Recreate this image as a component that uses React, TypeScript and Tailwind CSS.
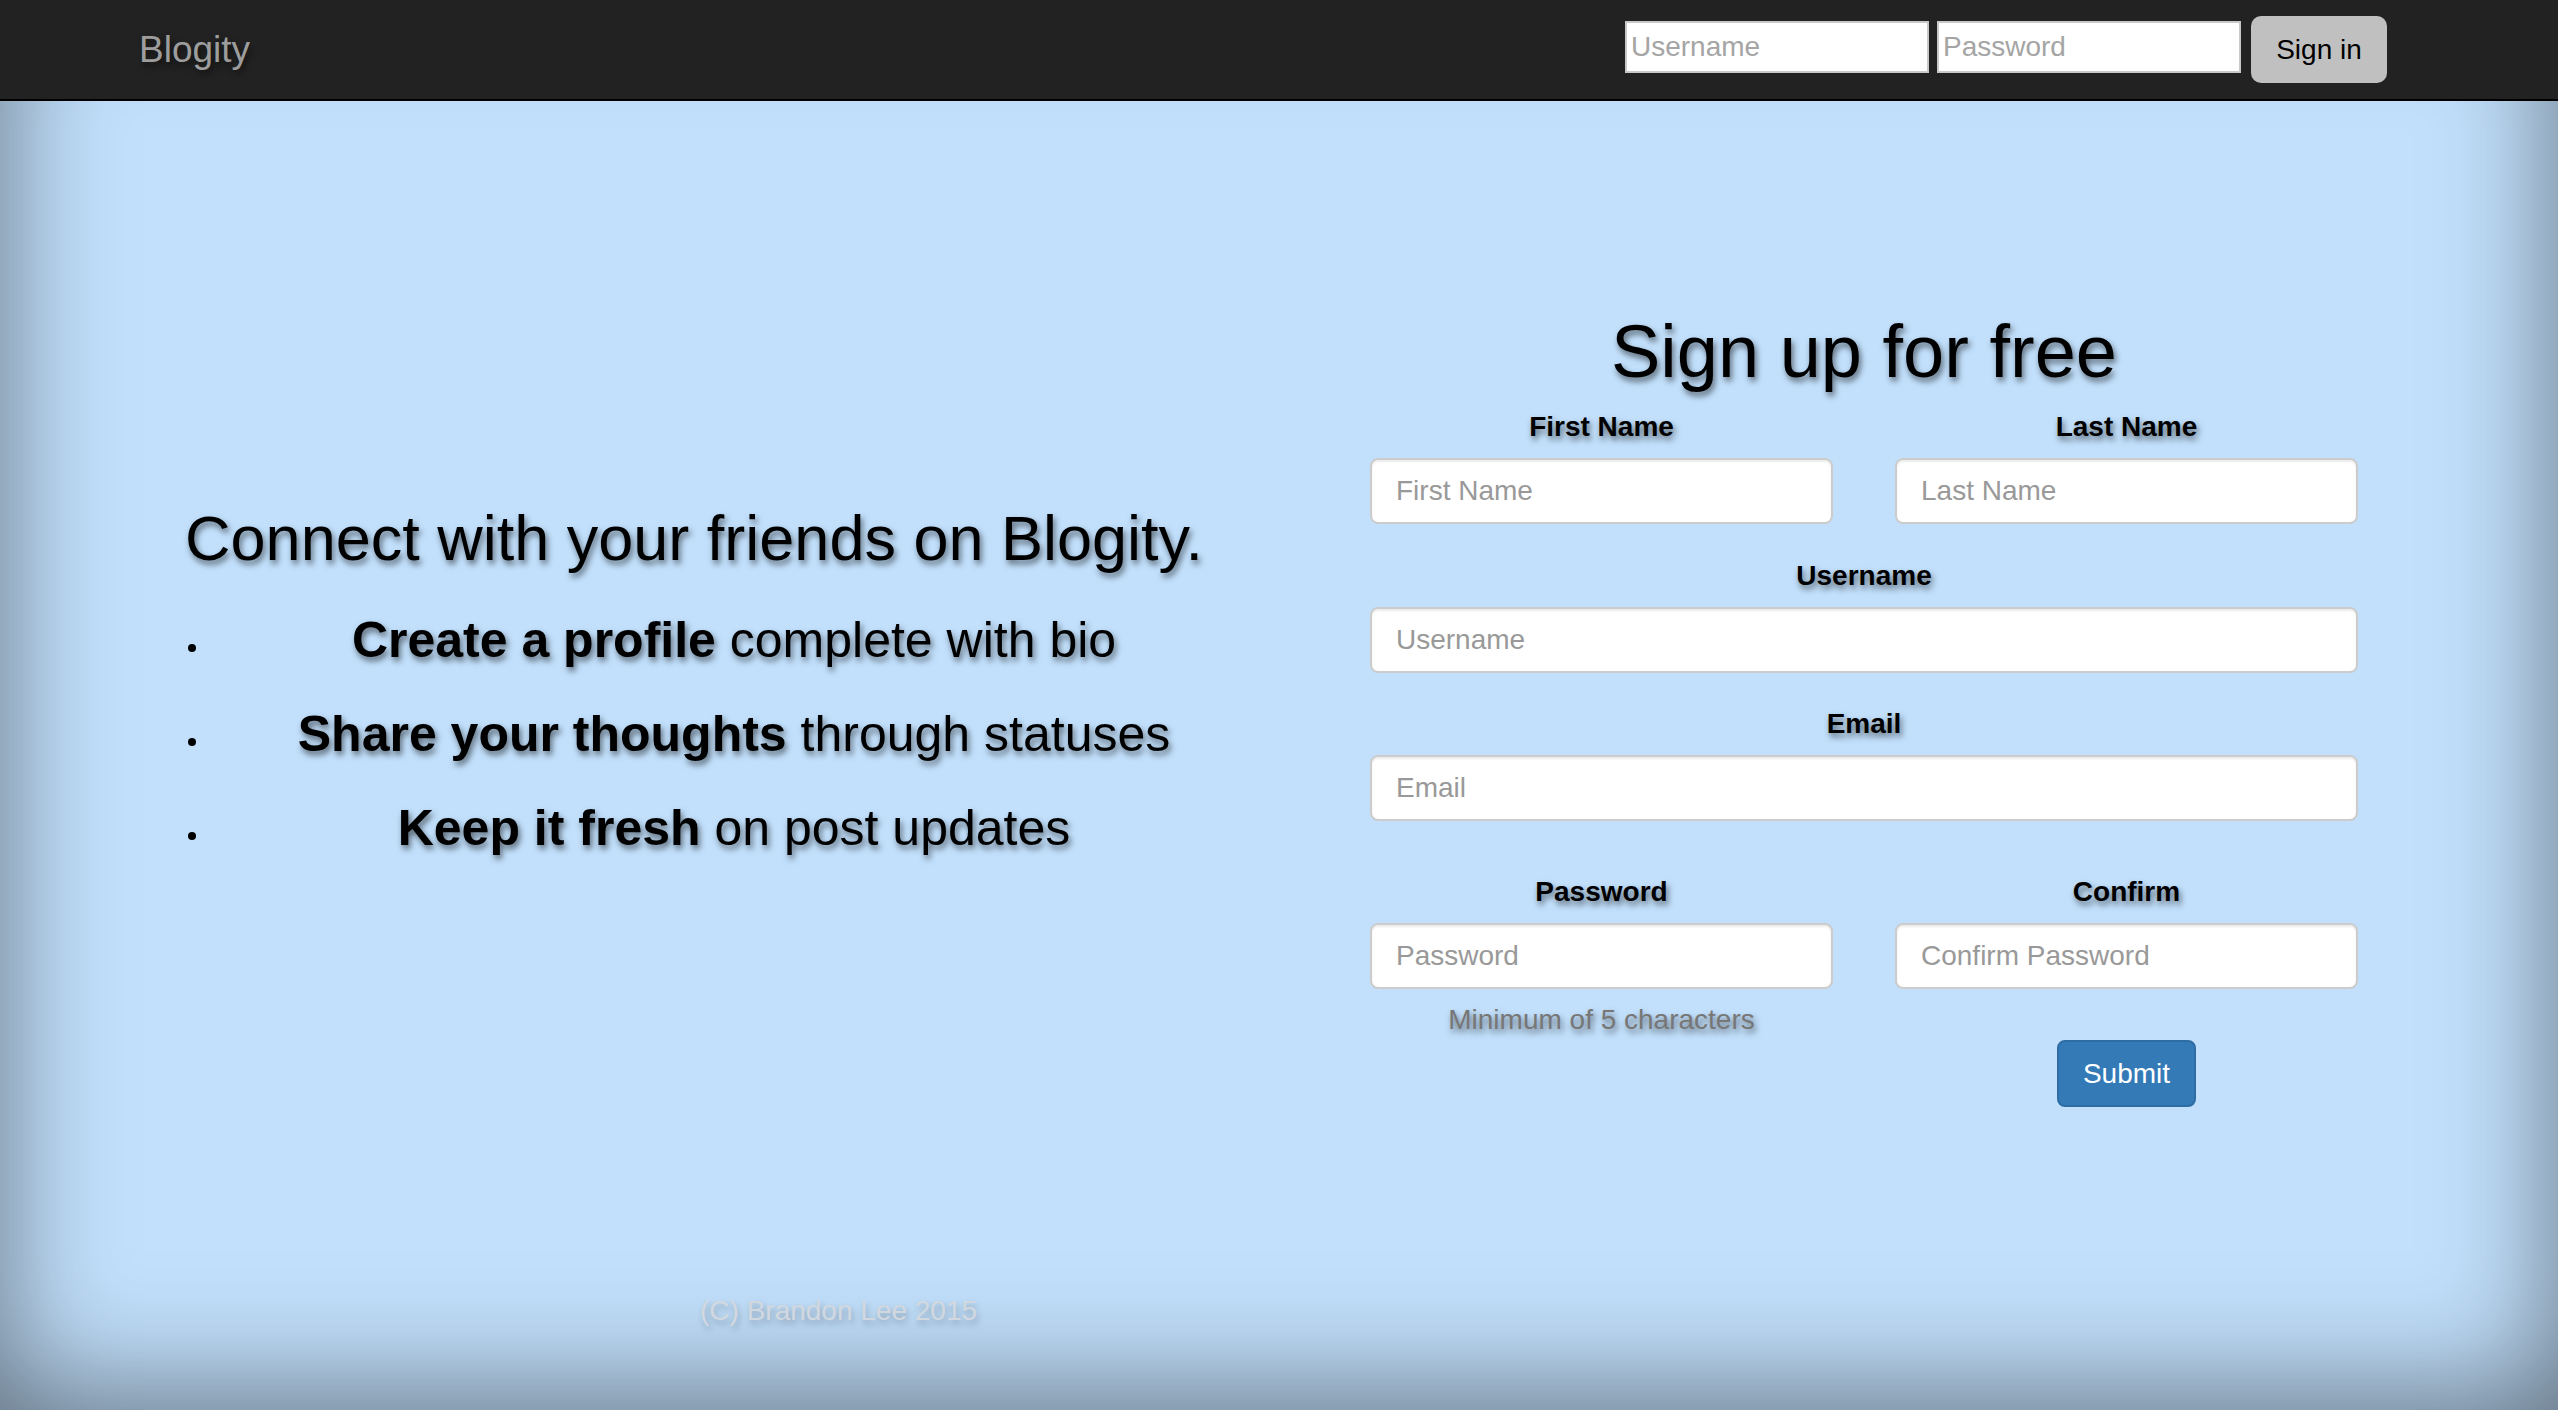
const shade = "[text-shadow:2px_4px_6px_rgba(0,0,0,0.55)]";

function Field({ label, placeholder }: { label: string; placeholder: string }) {
  return (
    <div className="flex flex-col">
      <label className={`text-center text-[28px] leading-[40px] font-bold text-black mb-[11px] ${shade}`}>
        {label}
      </label>
      <input
        placeholder={placeholder}
        className="h-[66px] w-full rounded-[8px] border-2 border-[#ccc] bg-white px-[24px] text-[28px] text-[#555] placeholder:text-[#999] shadow-[inset_0_2px_2px_rgba(0,0,0,0.075)] outline-none"
      />
    </div>
  );
}

export default function App() {
  const bullets: [string, string][] = [
    ["Create a profile", "complete with bio"],
    ["Share your thoughts", "through statuses"],
    ["Keep it fresh", "on post updates"],
  ];

  return (
    <div className="h-[1410px] overflow-hidden bg-[#c2e0fc] shadow-[inset_0_-15px_120px_rgba(0,0,0,0.5)] font-['Liberation_Sans',Arial,sans-serif]">
      {/* Navbar */}
      <nav className="h-[101px] bg-[#222] border-b-2 border-black">
        <div className="mx-auto flex h-[99px] w-[2340px] items-center justify-between px-[30px]">
          <span className={`text-[37px] text-[#9d9d9d] ${shade}`}>Blogity</span>
          <div className="mr-[32px] flex items-center">
            <input
              placeholder="Username"
              className="-mt-[5px] h-[52px] w-[304px] border-2 border-[#c8c8c8] bg-white px-[4px] text-[28px] text-black placeholder:text-[#a5a5a5] outline-none"
            />
            <input
              placeholder="Password"
              className="-mt-[5px] ml-[8px] h-[52px] w-[304px] border-2 border-[#c8c8c8] bg-white px-[4px] text-[28px] text-black placeholder:text-[#a5a5a5] outline-none"
            />
            <button className="ml-[10px] h-[67px] w-[136px] rounded-[10px] bg-[#c0c0c0] text-[28px] text-black">
              Sign in
            </button>
          </div>
        </div>
      </nav>

      {/* Main */}
      <main className="mx-auto w-[2340px] px-[30px] pt-[210px]">
        <div className="grid grid-cols-2 gap-x-[60px]">
          {/* Left */}
          <div className="pt-[193px]">
            <h2 className={`text-center text-[63px] leading-[68px] text-black ${shade}`}>
              Connect with your friends on Blogity.
            </h2>
            <ul className="mt-[21px] pl-[49px]">
              {bullets.map(([bold, rest]) => (
                <li key={bold} className="flex h-[94px] items-center">
                  <span className="mt-[16px] h-[8px] w-[8px] shrink-0 rounded-full bg-black" />
                  <span className={`ml-[23px] flex-1 text-center text-[50px] text-black ${shade}`}>
                    <b>{bold}</b> {rest}
                  </span>
                </li>
              ))}
            </ul>
          </div>

          {/* Right: sign-up form */}
          <div>
            <div className="mx-auto w-[988px]">
              <h1 className={`text-center text-[74px] leading-[81px] text-black ${shade}`}>Sign up for free</h1>
              <div className="mt-[15px] grid grid-cols-2 gap-x-[62px]">
                <Field label="First Name" placeholder="First Name" />
                <Field label="Last Name" placeholder="Last Name" />
              </div>
              <div className="mt-[32px]">
                <Field label="Username" placeholder="Username" />
              </div>
              <div className="mt-[31px]">
                <Field label="Email" placeholder="Email" />
              </div>
              <div className="mt-[51px] grid grid-cols-2 gap-x-[62px]">
                <Field label="Password" placeholder="Password" />
                <Field label="Confirm" placeholder="Confirm Password" />
              </div>
              <div className="mt-[11px] grid grid-cols-2 gap-x-[62px]">
                <p className={`text-center text-[28px] leading-[40px] text-[#777] ${shade}`}>
                  Minimum of 5 characters
                </p>
                <div />
              </div>
              <div className="grid grid-cols-2 gap-x-[62px]">
                <div />
                <div className="flex justify-center">
                  <button className="h-[67px] rounded-[8px] border-2 border-[#2e6da4] bg-[#337ab7] px-[24px] text-[28px] text-white">
                    Submit
                  </button>
                </div>
              </div>
            </div>
          </div>
        </div>

        {/* Footer */}
        <footer className="mt-[184px] pl-[561px]">
          <p className="text-[28px] leading-[40px] text-[#d2d8e0] [text-shadow:2px_4px_6px_rgba(0,0,0,0.25)]">
            (C) Brandon Lee 2015
          </p>
        </footer>
      </main>
    </div>
  );
}
